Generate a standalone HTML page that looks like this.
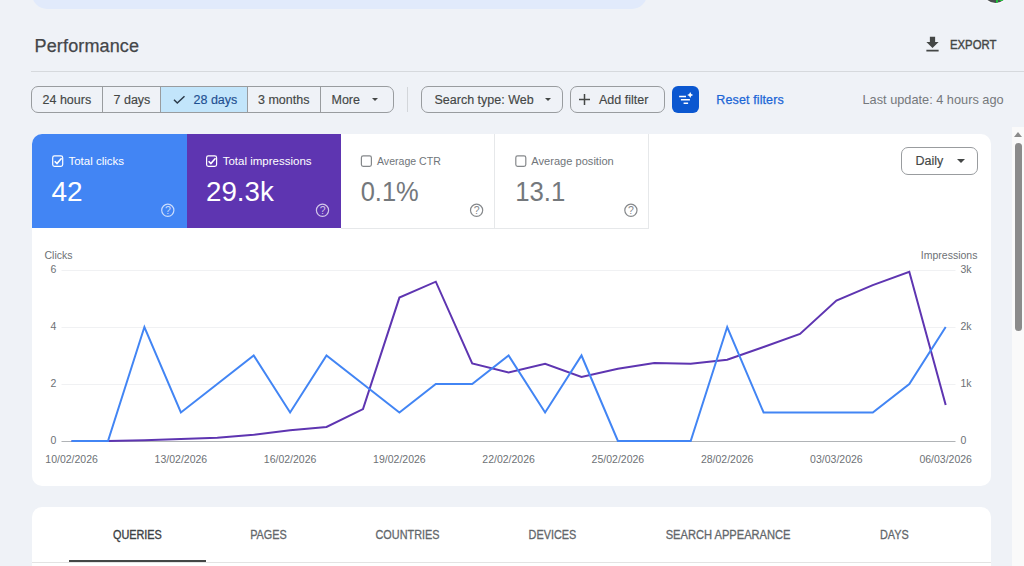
<!DOCTYPE html>
<html><head><meta charset="utf-8">
<style>
html,body{margin:0;padding:0;width:1024px;height:566px;overflow:hidden;background:#eff2f7;}
body{position:relative;font-family:"Liberation Sans",sans-serif;}
.a{position:absolute;}
.t{position:absolute;line-height:1;white-space:nowrap;}
.bt{-webkit-text-stroke:0.15px currentColor;}
.btn{position:absolute;box-sizing:border-box;border:1px solid #999c9f;border-radius:7px;}
.vsep{position:absolute;width:1px;background:#999c9f;}
.caret{position:absolute;width:0;height:0;border-left:3.5px solid transparent;border-right:3.5px solid transparent;border-top:3.5px solid #444746;}
</style></head>
<body>
<!-- top search bar -->
<div class="a" style="left:32px;top:-30px;width:614.5px;height:39.3px;background:#e1eafb;border-radius:15px;"></div>
<!-- avatar -->
<div class="a" style="left:982.4px;top:-23.1px;width:27px;height:27px;border-radius:50%;background:#fafbfd;"></div>
<div class="a" style="left:983.4px;top:-22.1px;width:25px;height:25px;border-radius:50%;background:#4a4d4f;overflow:hidden;">
  <div class="a" style="left:12.8px;top:22.5px;width:2.2px;height:2.5px;background:#1fc43a;"></div>
  <div class="a" style="left:15.5px;top:18px;width:5px;height:5.5px;background:#1fc43a;border-radius:2px;"></div>
</div>

<!-- Performance title -->
<div class="t" style="left:34.6px;top:36.6px;font-size:18px;color:#444649;letter-spacing:0.13px;-webkit-text-stroke:0.25px #444649;">Performance</div>
<!-- export -->
<svg class="a" style="left:922.3px;top:33.5px;" width="21" height="21" viewBox="0 0 24 24"><path fill="#444746" d="M5 20h14v-2H5v2zM19 9h-4V3H9v6H5l7 7 7-7z"/></svg>
<div class="t" style="left:950.3px;top:39.2px;font-size:12.3px;color:#444746;-webkit-text-stroke:0.4px #444746;transform:scaleX(0.92);transform-origin:0 0;">EXPORT</div>

<!-- divider -->
<div class="a" style="left:31px;top:71px;width:993px;height:1px;background:#d6d9dd;"></div>

<!-- time range group -->
<div class="btn" style="left:31px;top:86px;width:363px;height:27px;"></div>
<div class="a" style="left:161px;top:87px;width:86px;height:25px;background:#c2e5fb;"></div>
<div class="vsep" style="left:102px;top:86px;height:27px;"></div>
<div class="vsep" style="left:160px;top:86px;height:27px;"></div>
<div class="vsep" style="left:247px;top:86px;height:27px;"></div>
<div class="vsep" style="left:320px;top:86px;height:27px;"></div>
<div class="t" style="left:42.5px;top:93.8px;font-size:12.5px;-webkit-text-stroke:0.15px;color:#444746;">24 hours</div>
<div class="t" style="left:113.5px;top:93.8px;font-size:12.5px;-webkit-text-stroke:0.15px;color:#444746;">7 days</div>
<svg class="a" style="left:172px;top:93px;" width="14" height="12" viewBox="0 0 14 12"><path d="M2 6.7 L5.3 10 L12.5 3.2" fill="none" stroke="#2b3a4a" stroke-width="1.5"/></svg>
<div class="t" style="left:193.5px;top:93.8px;font-size:12.5px;-webkit-text-stroke:0.15px;color:#1d4f91;">28 days</div>
<div class="t" style="left:258px;top:93.8px;font-size:12.5px;-webkit-text-stroke:0.15px;color:#444746;">3 months</div>
<div class="t" style="left:331.5px;top:93.8px;font-size:12.5px;-webkit-text-stroke:0.15px;color:#444746;">More</div>
<div class="caret" style="left:371.5px;top:98.3px;"></div>

<div class="a" style="left:407px;top:87px;width:1px;height:25px;background:#d3d6da;"></div>

<div class="btn" style="left:421px;top:86px;width:142px;height:27px;"></div>
<div class="t" style="left:434.5px;top:93.8px;font-size:12.5px;-webkit-text-stroke:0.15px;color:#444746;">Search type: Web</div>
<div class="caret" style="left:545px;top:98.3px;"></div>

<div class="btn" style="left:569.5px;top:86px;width:95.5px;height:27px;"></div>
<svg class="a" style="left:578px;top:93px;" width="13" height="13" viewBox="0 0 13 13"><path d="M6.5 1v11M1 6.5h11" stroke="#444746" stroke-width="1.5"/></svg>
<div class="t" style="left:599px;top:93.8px;font-size:12.5px;-webkit-text-stroke:0.15px;color:#444746;">Add filter</div>

<div class="a" style="left:672px;top:86px;width:27px;height:27px;border-radius:6px;background:#0b57d0;"></div>
<svg class="a" style="left:672px;top:86px;" width="27" height="27" viewBox="0 0 27 27"><path d="M7.1 10.55h6.9M8.9 13.85h9M11.6 17.15h4.5" stroke="#fff" stroke-width="1.5"/><path d="M18.2 5.9Q18.7 8.4 21.2 8.9Q18.7 9.4 18.2 11.9Q17.7 9.4 15.2 8.9Q17.7 8.4 18.2 5.9z" fill="#fff"/></svg>
<div class="t" style="left:716.3px;top:93.8px;font-size:12.5px;-webkit-text-stroke:0.25px;color:#1b66d6;letter-spacing:0.12px;">Reset filters</div>
<div class="t" style="left:862.5px;top:93.5px;font-size:12.75px;color:#75787b;">Last update: 4 hours ago</div>

<!-- chart card -->
<div class="a" style="left:32px;top:134px;width:959px;height:352px;background:#fff;border-radius:10px;overflow:hidden;">
  <div class="a" style="left:0;top:0;width:154.5px;height:94px;background:#4285f4;"></div>
  <div class="a" style="left:154.5px;top:0;width:154px;height:94px;background:#5e35b1;"></div>
  <div class="a" style="left:462px;top:0;width:1px;height:94px;background:#e6e8ea;"></div>
  <div class="a" style="left:616px;top:0;width:1px;height:94px;background:#e6e8ea;"></div>
  <div class="a" style="left:308.5px;top:94px;width:308.5px;height:1px;background:#e6e8ea;"></div>
</div>

<svg class="a" style="left:0;top:0;" width="1024" height="566" viewBox="0 0 1024 566" font-family="Liberation Sans, sans-serif">
<rect x="52.7" y="155.9" width="10" height="10.4" rx="1.8" fill="none" stroke="#ffffff" stroke-width="1.2"/>
<path d="M54.7 161.2 l2.3 2.3 l4.6 -5.2" fill="none" stroke="#fff" stroke-width="1.6"/>
<text transform="translate(68.4 164.6) scale(1.0 1)" font-size="11.5" fill="#ffffff">Total clicks</text>
<text transform="translate(51.4 201) scale(1.0 1)" font-size="28" fill="#ffffff">42</text>
<circle cx="167.8" cy="210.3" r="6.1" fill="none" stroke="rgba(255,255,255,0.72)" stroke-width="1.2"/>
<text x="167.9" y="213.9" font-size="10.5" text-anchor="middle" fill="rgba(255,255,255,0.72)">?</text>
<rect x="206.6" y="155.9" width="10" height="10.4" rx="1.8" fill="none" stroke="#ffffff" stroke-width="1.2"/>
<path d="M208.6 161.2 l2.3 2.3 l4.6 -5.2" fill="none" stroke="#fff" stroke-width="1.6"/>
<text transform="translate(222.7 164.6) scale(1.0 1)" font-size="11.5" fill="#ffffff">Total impressions</text>
<text transform="translate(206.0 201) scale(0.99 1)" font-size="28" fill="#ffffff">29.3k</text>
<circle cx="322.5" cy="210.3" r="6.1" fill="none" stroke="rgba(255,255,255,0.72)" stroke-width="1.2"/>
<text x="322.6" y="213.9" font-size="10.5" text-anchor="middle" fill="rgba(255,255,255,0.72)">?</text>
<rect x="361.40000000000003" y="155.9" width="10" height="10.4" rx="1.8" fill="none" stroke="#85888b" stroke-width="1.2"/>
<text transform="translate(377.0 164.6) scale(0.92 1)" font-size="11.5" fill="#70757a">Average CTR</text>
<text transform="translate(360.7 201) scale(0.91 1)" font-size="28" fill="#74787c">0.1%</text>
<circle cx="476.6" cy="210.3" r="6.1" fill="none" stroke="#85888b" stroke-width="1.2"/>
<text x="476.70000000000005" y="213.9" font-size="10.5" text-anchor="middle" fill="#85888b">?</text>
<rect x="515.8000000000001" y="155.9" width="10" height="10.4" rx="1.8" fill="none" stroke="#85888b" stroke-width="1.2"/>
<text transform="translate(531.3 164.6) scale(0.965 1)" font-size="11.5" fill="#70757a">Average position</text>
<text transform="translate(515.2 201) scale(0.92 1)" font-size="28" fill="#74787c">13.1</text>
<circle cx="630.9" cy="210.3" r="6.1" fill="none" stroke="#85888b" stroke-width="1.2"/>
<text x="631.0" y="213.9" font-size="10.5" text-anchor="middle" fill="#85888b">?</text>
</svg>
<svg class="a" style="left:0;top:0;" width="1024" height="566" viewBox="0 0 1024 566" font-family="Liberation Sans, sans-serif">
<rect x="61.5" y="270" width="894" height="1" fill="#f0f1f3"/>
<rect x="61.5" y="327" width="894" height="1" fill="#f0f1f3"/>
<rect x="61.5" y="384" width="894" height="1" fill="#f0f1f3"/>
<rect x="61.5" y="441" width="894" height="1" fill="#b0b3b6"/>
<g font-size="10.5" fill="#6d7175">
<text x="44.5" y="258.7">Clicks</text>
<text x="920.8" y="258.6">Impressions</text>
<text x="50.5" y="273.0">6</text>
<text x="50.5" y="330.0">4</text>
<text x="50.5" y="387.0">2</text>
<text x="50.5" y="444.0">0</text>
<text x="960.5" y="273.0">3k</text>
<text x="960.5" y="330.0">2k</text>
<text x="960.5" y="387.0">1k</text>
<text x="960.5" y="444.0">0</text>
<text x="71.6" y="462.5" text-anchor="middle">10/02/2026</text>
<text x="180.9" y="462.5" text-anchor="middle">13/02/2026</text>
<text x="290.1" y="462.5" text-anchor="middle">16/02/2026</text>
<text x="399.4" y="462.5" text-anchor="middle">19/02/2026</text>
<text x="508.6" y="462.5" text-anchor="middle">22/02/2026</text>
<text x="617.9" y="462.5" text-anchor="middle">25/02/2026</text>
<text x="727.2" y="462.5" text-anchor="middle">28/02/2026</text>
<text x="836.4" y="462.5" text-anchor="middle">03/03/2026</text>
<text x="945.7" y="462.5" text-anchor="middle">06/03/2026</text>
</g>
<polyline points="71.6,441.0 108.0,441.0 144.4,440.2 180.9,438.9 217.3,437.7 253.7,434.7 290.1,430.3 326.5,426.9 363.0,409.1 399.4,297.6 435.8,281.7 472.2,363.4 508.6,372.5 545.1,363.7 581.5,377.0 617.9,368.8 654.3,363.1 690.7,363.7 727.2,359.7 763.6,347.0 800.0,334.0 836.4,300.5 872.8,285.1 909.3,271.7 945.7,405.0" fill="none" stroke="#5e35b1" stroke-width="2" stroke-linejoin="miter"/>
<polyline points="71.6,441.0 108.0,441.0 144.4,327.0 180.9,412.5 217.3,384.0 253.7,355.5 290.1,412.5 326.5,355.5 363.0,384.0 399.4,412.5 435.8,384.0 472.2,384.0 508.6,355.5 545.1,412.5 581.5,355.5 617.9,441.0 654.3,441.0 690.7,441.0 727.2,327.0 763.6,412.5 800.0,412.5 836.4,412.5 872.8,412.5 909.3,384.0 945.7,327.0" fill="none" stroke="#4285f4" stroke-width="2" stroke-linejoin="miter"/>
</svg>

<!-- tabs card -->
<div class="a" style="left:32px;top:507px;width:959px;height:80px;background:#fff;border-radius:10px;"></div>
<!-- daily -->
<div class="btn" style="left:901px;top:147px;width:76.5px;height:27.5px;"></div>
<div class="t" style="left:915.5px;top:155.4px;font-size:12.5px;-webkit-text-stroke:0.15px;color:#444746;">Daily</div>
<div class="caret" style="left:957px;top:159.4px;border-left-width:4px;border-right-width:4px;border-top-width:4.2px;"></div>
<!-- tabs -->
<div class="a" style="left:32px;top:561.8px;width:959px;height:1px;background:#e3e3e3;"></div>
<div class="a" style="left:69px;top:559.5px;width:136.5px;height:2.5px;background:#444746;"></div>
<svg class="a" style="left:0;top:0;" width="1024" height="566" viewBox="0 0 1024 566" font-family="Liberation Sans, sans-serif" font-size="12.5" text-anchor="middle">
<text transform="translate(137.4 538.75) scale(0.87 1)" fill="#3c4043" stroke="#3c4043" stroke-width="0.35">QUERIES</text>
<text transform="translate(268.5 538.75) scale(0.87 1)" fill="#62666a" stroke="#62666a" stroke-width="0.3">PAGES</text>
<text transform="translate(407.5 538.75) scale(0.87 1)" fill="#62666a" stroke="#62666a" stroke-width="0.3">COUNTRIES</text>
<text transform="translate(552.4 538.75) scale(0.87 1)" fill="#62666a" stroke="#62666a" stroke-width="0.3">DEVICES</text>
<text transform="translate(728.1 538.75) scale(0.89 1)" fill="#62666a" stroke="#62666a" stroke-width="0.3">SEARCH APPEARANCE</text>
<text transform="translate(894.3 538.75) scale(0.87 1)" fill="#62666a" stroke="#62666a" stroke-width="0.3">DAYS</text>
</svg>
<!-- scrollbar -->
<div class="a" style="left:1012px;top:127px;width:12px;height:439px;background:#fafafa;"></div>
<div class="a" style="left:1014px;top:131.5px;width:0;height:0;border-left:4px solid transparent;border-right:4px solid transparent;border-bottom:5.5px solid #8b8b8b;"></div>
<div class="a" style="left:1014.5px;top:142.5px;width:7.5px;height:188px;background:#8b8b8b;border-radius:4px;"></div>

</body></html>
